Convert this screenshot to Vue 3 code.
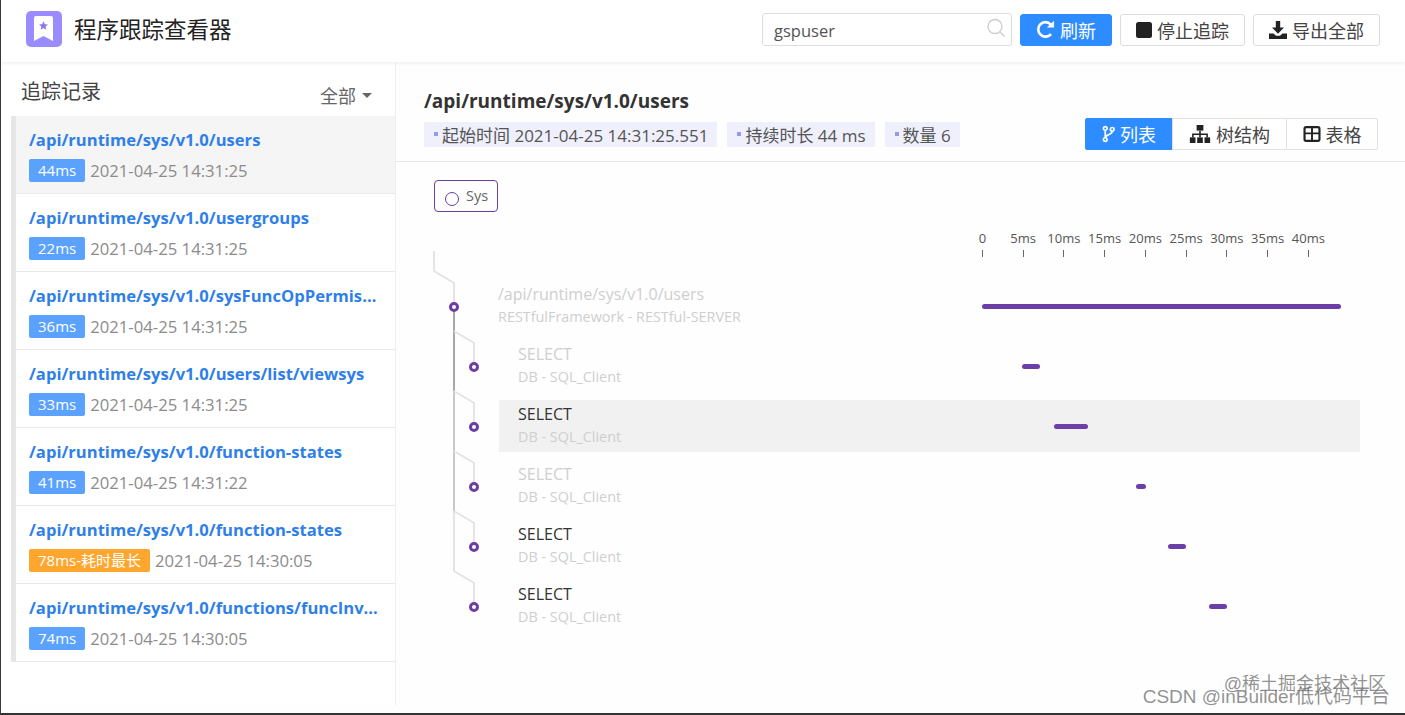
<template>
  <div class="page">
    <header class="topbar">
      <div class="brand">
        <span class="logo">
          <svg viewBox="0 0 36 36" width="36" height="36">
            <rect width="36" height="36" rx="5" fill="#9a8cff" />
            <path d="M8 7a2 2 0 0 1 2-2h15a2 2 0 0 1 2 2v23l-9.500-5-9.500 5z" fill="#fff" />
            <path d="M17.500 10.200l1.300 3 3.200.3-2.400 2.100.7 3.200-2.800-1.700-2.800 1.700.7-3.200-2.400-2.100 3.200-.3z" fill="#8a78f0" />
          </svg>
        </span>
        <span class="brand-name">程序跟踪查看器</span>
      </div>
      <div class="actions">
        <div class="search">
          <input class="search-input" type="text" value="gspuser" />
          <svg class="search-icon" viewBox="0 0 20 20" width="20" height="20">
            <circle cx="9" cy="8.500" r="7" fill="none" stroke="#ccc" stroke-width="1.300" />
            <path d="M14 14l4.500 4.500" stroke="#ccc" stroke-width="1.300" />
          </svg>
        </div>
        <button class="btn primary refresh">
          <svg viewBox="0 0 20 20" width="19" height="19">
            <path d="M15.800 14.800A7.600 7.600 0 1 1 15.400 4.600" fill="none" stroke="#fff" stroke-width="2.800" />
            <path d="M11.500 8h7.500V.8z" fill="#fff" />
          </svg>
          刷新
        </button>
        <button class="btn stop">
          <svg viewBox="0 0 16 16" width="16" height="16"><rect width="16" height="16" rx="2.500" fill="#222" /></svg>
          停止追踪
        </button>
        <button class="btn export">
          <svg viewBox="0 0 18 18" width="18" height="18">
            <path d="M6.800 0h4.400v6.500H15L9 12.800 3 6.500h3.800z" fill="#222" />
            <path d="M0 12.500h4.500l2.500 2.300h4l2.500-2.300H18V18H0z" fill="#222" />
          </svg>
          导出全部
        </button>
      </div>
    </header>

    <div class="body">
      <aside class="sidebar">
        <div class="side-head">
          <span class="side-title">追踪记录</span>
          <span class="side-filter">全部<i class="caret"></i></span>
        </div>
        <ul class="records">
          <li v-for="(r, i) in records" :key="i" class="record" :class="{ active: i === 0 }">
            <div class="record-url">{{ r.url }}</div>
            <div class="record-meta">
              <span class="badge" :class="{ slow: r.slow }">{{ r.cost }}</span>
              <span class="record-time">{{ r.time }}</span>
            </div>
          </li>
        </ul>
      </aside>

      <main class="main">
        <div class="main-head">
          <h2 class="main-title">/api/runtime/sys/v1.0/users</h2>
          <div class="main-info">
            <div class="tags">
              <span v-for="t in infoTags" :key="t" class="tag"><i class="tag-dot"></i>{{ t }}</span>
            </div>
            <div class="views">
              <button class="view on">
                <svg viewBox="0 0 14 18" width="13" height="18">
                  <g fill="none" stroke="#fff" stroke-width="1.800">
                    <circle cx="3.500" cy="3" r="2" />
                    <circle cx="3.500" cy="15" r="2" />
                    <circle cx="11" cy="4" r="2" />
                    <path d="M3.500 5v8M11 6c0 4-7 3-7 7" />
                  </g>
                </svg>
                列表
              </button>
              <button class="view">
                <svg viewBox="0 0 18 16" width="22" height="18" fill="#222">
                  <rect x="6" y="0" width="6" height="5" />
                  <rect x="0" y="11" width="5" height="5" />
                  <rect x="6.500" y="11" width="5" height="5" />
                  <rect x="13" y="11" width="5" height="5" />
                  <path d="M8.300 5h1.400v2.500H16V11h-1.400V8.900H9.700V11H8.300V8.900H3.400V11H2V7.500h6.300z" />
                </svg>
                树结构
              </button>
              <button class="view">
                <svg viewBox="0 0 16 15" width="18" height="16">
                  <rect x="1" y="1" width="14" height="13" rx="1.500" fill="none" stroke="#222" stroke-width="2" />
                  <path d="M1 6h14v1.800H1zM7.100 1h1.800v13H7.100z" fill="#222" />
                </svg>
                表格
              </button>
            </div>
          </div>
        </div>

        <div class="trace">
          <span class="legend"><i class="legend-dot"></i><span class="legend-text">Sys</span></span>

          <div class="axis">
            <div v-for="(t, i) in ticks" :key="i" class="tick">
              <span class="tick-label">{{ t }}</span>
              <i class="tick-mark"></i>
            </div>
          </div>

          <div class="spans">
            <!-- 连接线和节点 -->
            <svg class="links" width="60" height="380" viewBox="0 0 60 380">
              <path d="M0 0v20l20 12v24" class="ln-faint" />
              <path d="M20 56v84" class="ln-dark" />
              <path d="M20 140v120" class="ln-mid" />
              <path d="M20 260v60" class="ln-faint" />
              <path v-for="y in branchY" :key="y" :d="`M20 ${y}l20 12v24`" class="ln-faint" />
              <circle v-for="d in dots" :key="d.y" :cx="d.x" :cy="d.y" r="3.500" class="node" />
            </svg>

            <div v-for="(s, i) in spans" :key="i" class="span" :class="{ hover: s.hover, root: i === 0 }">
              <div class="span-label">
                <div class="span-name" :class="{ faded: s.faded }">{{ s.name }}</div>
                <div class="span-sub">{{ s.sub }}</div>
              </div>
              <div class="span-track">
                <i class="bar" :style="{ left: s.left + 'px', width: s.width + 'px' }"></i>
              </div>
            </div>
          </div>
        </div>
      </main>
    </div>

    <div class="watermark">
      <div class="wm-a">@稀土掘金技术社区</div>
      <div class="wm-b">CSDN @inBuilder低代码平台</div>
    </div>
  </div>
</template>

<script setup>
const records = [
  { url: '/api/runtime/sys/v1.0/users', cost: '44ms', time: '2021-04-25 14:31:25' },
  { url: '/api/runtime/sys/v1.0/usergroups', cost: '22ms', time: '2021-04-25 14:31:25' },
  { url: '/api/runtime/sys/v1.0/sysFuncOpPermissions', cost: '36ms', time: '2021-04-25 14:31:25' },
  { url: '/api/runtime/sys/v1.0/users/list/viewsys', cost: '33ms', time: '2021-04-25 14:31:25' },
  { url: '/api/runtime/sys/v1.0/function-states', cost: '41ms', time: '2021-04-25 14:31:22' },
  { url: '/api/runtime/sys/v1.0/function-states', cost: '78ms-耗时最长', time: '2021-04-25 14:30:05', slow: true },
  { url: '/api/runtime/sys/v1.0/functions/funcInvocations', cost: '74ms', time: '2021-04-25 14:30:05' }
]

const infoTags = ['起始时间 2021-04-25 14:31:25.551', '持续时长 44 ms', '数量 6']

const ticks = ['0', '5ms', '10ms', '15ms', '20ms', '25ms', '30ms', '35ms', '40ms']

const sql = { name: 'SELECT', sub: 'DB - SQL_Client' }
const spans = [
  { name: '/api/runtime/sys/v1.0/users', sub: 'RESTfulFramework - RESTful-SERVER', faded: true, left: 0, width: 359 },
  { ...sql, faded: true, left: 40, width: 18 },
  { ...sql, hover: true, left: 72, width: 34 },
  { ...sql, faded: true, left: 154, width: 10 },
  { ...sql, left: 186, width: 18 },
  { ...sql, left: 227, width: 18 }
]

// 子节点分支的起点，相对连接线 svg
const branchY = [80, 140, 200, 260, 320]
const dots = [
  { x: 20, y: 56 },
  { x: 40, y: 116 },
  { x: 40, y: 176 },
  { x: 40, y: 236 },
  { x: 40, y: 296 },
  { x: 40, y: 356 }
]
</script>

<style>
html,
body {
  margin: 0;
  background: #fff;
}
</style>

<style scoped>
.page {
  position: relative;
  box-sizing: border-box;
  height: 715px;
  overflow: hidden;
  border-left: 1px solid #3a3a3a;
  border-bottom: 2px solid #333;
  background: #fefefe;
  font-family: "Open Sans", "Noto Sans CJK SC", sans-serif;
  color: #333;
}

.topbar {
  position: relative;
  display: flex;
  justify-content: space-between;
  align-items: center;
  box-sizing: border-box;
  height: 62px;
  padding: 0 25px 3px;
  background: #fff;
  box-shadow: 0 1px 4px rgba(0, 0, 0, 0.08);
}

.brand {
  display: flex;
  align-items: center;
  gap: 12px;
  margin-bottom: 2px;
}

.logo {
  display: block;
  width: 36px;
  height: 36px;
}

.brand-name {
  font-size: 22.500px;
  color: #222;
}

.actions {
  display: flex;
  align-items: center;
  gap: 8px;
}

.search {
  position: relative;
  width: 250px;
  height: 33px;
}

.search-input {
  box-sizing: border-box;
  width: 100%;
  height: 100%;
  padding: 2px 11px 0;
  border: 1px solid #ddd;
  border-radius: 3px;
  outline: none;
  font: inherit;
  font-size: 16.500px;
  color: #555;
}

.search-icon {
  position: absolute;
  right: 6px;
  top: 5px;
}

.btn {
  display: flex;
  align-items: center;
  justify-content: center;
  gap: 5px;
  box-sizing: border-box;
  height: 32px;
  border: 1px solid #ddd;
  border-radius: 3px;
  background: #fff;
  font: inherit;
  font-size: 18px;
  color: #444;
  padding: 0;
}

.btn.primary {
  border-color: #2d8cff;
  background: #2d8cff;
  color: #fff;
}

.refresh {
  width: 92px;
}

.stop {
  width: 125px;
}

.export {
  width: 127px;
}

.body {
  display: flex;
  height: 641px;
  margin-top: 1px;
}

.sidebar {
  box-sizing: border-box;
  width: 395px;
  height: 642px;
  flex: none;
  padding-left: 10px;
  border-right: 1px solid #eee;
  background: #fff;
}

.side-head {
  display: flex;
  justify-content: space-between;
  align-items: flex-end;
  height: 53px;
  padding: 0 23px 0 10px;
}

.side-title {
  margin-bottom: 11px;
  font-size: 20px;
  color: #444;
}

.side-filter {
  display: flex;
  align-items: center;
  margin-bottom: 8px;
  font-size: 18px;
  color: #666;
}

.caret {
  margin-left: 6px;
  border: 5px solid transparent;
  border-top-color: #666;
  border-bottom-width: 0;
}

.records {
  list-style: none;
  margin: 0;
  padding: 0;
  border-left: 5px solid #e6e6e6;
}

.record {
  box-sizing: border-box;
  height: 78px;
  padding: 11px 11px 0 13px;
  border-bottom: 1px solid #eaeaea;
}

.record.active {
  background: #f5f5f5;
}

.record-url {
  overflow: hidden;
  white-space: nowrap;
  text-overflow: ellipsis;
  font-size: 16.600px;
  line-height: 26px;
  font-weight: 700;
  color: #2f7fe8;
}

.record-meta {
  display: flex;
  align-items: center;
  gap: 5px;
  margin-top: 6px;
}

.badge {
  box-sizing: border-box;
  height: 23px;
  min-width: 55px;
  padding: 0 9px;
  border-radius: 2px;
  background: #5ba2ff;
  color: #fff;
  font-size: 15px;
  line-height: 23px;
  text-align: center;
}

.badge.slow {
  background: #ffa62e;
}

.record-time {
  font-size: 16.700px;
  color: #8c8c8c;
}

.main {
  flex: 1;
  min-width: 0;
}

.main-head {
  box-sizing: border-box;
  height: 99px;
  padding: 24px 27px 0 28px;
  border-bottom: 1px solid #e6e6e6;
}

.main-title {
  margin: 0;
  font-size: 19px;
  line-height: 28px;
  font-weight: 700;
  color: #333;
}

.main-info {
  display: flex;
  justify-content: space-between;
  align-items: center;
  margin-top: 3px;
}

.tags {
  display: flex;
  gap: 10px;
}

.tag {
  display: flex;
  align-items: center;
  height: 25px;
  padding: 0 9px 0 10px;
  background: #eff0fc;
  font-size: 17px;
  color: #555;
}

.tag-dot {
  width: 4px;
  height: 4px;
  margin-right: 4px;
  background: #8f9df0;
}

.views {
  display: flex;
}

.view {
  display: flex;
  align-items: center;
  justify-content: center;
  gap: 5px;
  box-sizing: border-box;
  height: 32px;
  padding: 0;
  margin-left: -1px;
  border: 1px solid #e2e2e2;
  background: #fff;
  font: inherit;
  font-size: 18px;
  color: #444;
}

.view:nth-child(1) {
  width: 88px;
  border-color: #2d8cff;
  border-radius: 2px 0 0 2px;
  background: #2d8cff;
  color: #fff;
}

.view:nth-child(2) {
  width: 115px;
}

.view:nth-child(3) {
  width: 92px;
  border-radius: 0 2px 2px 0;
}

.trace {
  padding: 18px 45px 0 38px;
}

.legend {
  display: flex;
  align-items: center;
  gap: 7px;
  box-sizing: border-box;
  width: 64px;
  height: 32px;
  padding-left: 10px;
  border: 1px solid #6a3fa0;
  border-radius: 4px;
  font-size: 14.500px;
  color: #666;
}

.legend-dot {
  flex: none;
  box-sizing: border-box;
  width: 14px;
  height: 14px;
  margin-top: 5px;
  border: 1.500px solid #6a3fa0;
  border-radius: 50%;
}

.legend-text {
  margin-top: -1px;
}

.axis {
  display: flex;
  height: 44px;
  margin: 17px 0 0 528px;
}

.tick {
  display: flex;
  flex-direction: column;
  align-items: center;
  width: 40.750px;
  flex: none;
}

.tick-label {
  font-size: 13px;
  line-height: 18px;
  color: #555;
  white-space: nowrap;
}

.tick-mark {
  width: 1px;
  height: 7px;
  margin-top: 3px;
  background: #666;
}

.spans {
  position: relative;
  display: flex;
  flex-direction: column;
  gap: 8px;
  margin-top: 7px;
  padding-left: 65px;
}

.links {
  position: absolute;
  left: 0;
  top: -29.500px;
  overflow: visible;
}

.links path {
  fill: none;
  stroke-width: 2;
}

.ln-faint {
  stroke: #e4e4e4;
}

.ln-mid {
  stroke: #c8c8c8;
}

.ln-dark {
  stroke: #a8a8a8;
}

.node {
  fill: #fff;
  stroke: #6a3fa0;
  stroke-width: 3;
}

.span {
  display: flex;
  height: 52px;
}

.span.hover {
  background: #f1f1f1;
}

.span-label {
  box-sizing: border-box;
  width: 483px;
  flex: none;
  padding: 2px 0 0 19px;
}

.root .span-label {
  width: 484px;
  margin-left: -1px;
  padding-left: 0;
}

.span-name {
  font-size: 16px;
  line-height: 24px;
  color: #333;
  white-space: nowrap;
}

.span-name.faded {
  color: #cfcfcf;
}

.span-sub {
  margin-top: 1px;
  font-size: 14.400px;
  line-height: 20px;
  color: #cfcfcf;
  white-space: nowrap;
}

.span-track {
  position: relative;
  flex: 1;
}

.bar {
  position: absolute;
  top: 24px;
  height: 5px;
  border-radius: 3px;
  background: #6c3fa8;
}

.watermark {
  position: absolute;
  right: 15px;
  bottom: 6px;
  font-family: "Liberation Sans", "Noto Sans CJK SC", sans-serif;
  color: rgba(110, 110, 110, 0.75);
  text-align: right;
  pointer-events: none;
}

.wm-a {
  margin: 0 4px -4px 0;
  font-size: 18px;
  line-height: 14px;
}

.wm-b {
  font-size: 19px;
  line-height: 20px;
}
</style>
